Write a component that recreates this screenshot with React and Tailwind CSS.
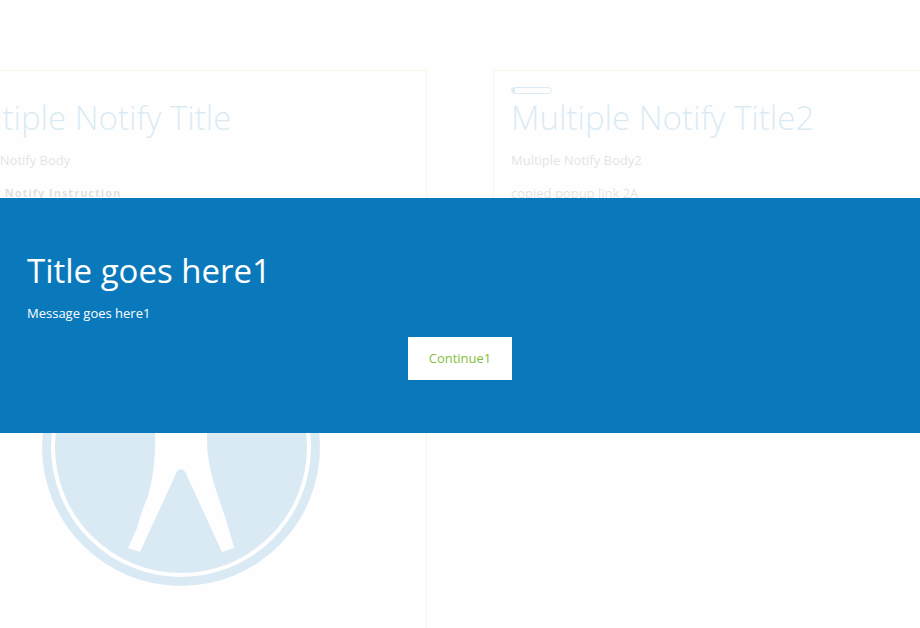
function BodyEmblem() {
  return (
    <svg viewBox="0 0 278 278" className="h-[278px] w-[278px]" role="img" aria-label="Human figure">
      <circle cx="139" cy="139" r="139" fill="#0b79bd" />
      <circle cx="139" cy="139" r="128" fill="none" stroke="#fff" strokeWidth="4" />
      <circle cx="139" cy="52" r="22" fill="#fff" />
      <path
        fill="#fff"
        d="M113 125C114 145 111 172 106 188C100 203 97 212 95 220L86 240L98 244L132 170C136 158 142 158 146 170L180 244L192 240C188 224 182 205 177 191C169 168 164 146 165 125L165 92L113 92Z"
      />
    </svg>
  );
}

function Panel({ title, body, indicator, children }) {
  return (
    <section className="border border-[#c0d060] px-[17px] pt-4">
      <div className="h-[7px]">{indicator}</div>
      <h2 className="mt-px text-[33px] leading-[46px] font-light whitespace-nowrap text-[#0b79bd]">{title}</h2>
      <p className="mt-[9px] text-[13px] leading-5 text-[#444]">{body}</p>
      {children}
    </section>
  );
}

function Dialog() {
  return (
    <div className="fixed inset-0 flex items-center bg-[#fefefe]/85 pt-[3px]">
      <div
        role="dialog"
        aria-modal="true"
        aria-labelledby="dialog-title"
        className="w-full bg-[#0a79bc] px-[27px] pt-[50px] pb-[53px] text-white"
      >
        <h1 id="dialog-title" className="text-[33px] leading-[46px]">Title goes here1</h1>
        <p className="mt-[9px] text-[13px] leading-5 font-medium">Message goes here1</p>
        <div className="mt-[14px] flex justify-center">
          <button type="button" className="h-[43px] bg-white px-[21px] text-[13px] text-[#82bf3b]">
            Continue1
          </button>
        </div>
      </div>
    </div>
  );
}

export default function App() {
  return (
    <div className="h-screen overflow-hidden bg-[#fefefe] pt-[70px] font-['Open_Sans',sans-serif]">
      <main className="-mx-[71px] grid h-screen grid-cols-2 gap-[66px]">
        <Panel title="Multiple Notify Title" body="Multiple Notify Body">
          <p className="mt-[13px] text-[11px] leading-5 font-bold tracking-[1px] text-[#333]">
            Multiple Notify Instruction
          </p>
          <div className="mt-[105px] flex justify-center pl-[5px]">
            <BodyEmblem />
          </div>
        </Panel>
        <div className="grid h-[250px]">
          <Panel
            title="Multiple Notify Title2"
            body="Multiple Notify Body2"
            indicator={
              <div className="h-[7px] w-[41px] overflow-hidden rounded-full border border-[#0b79bd]">
                <div className="h-full w-[3px] bg-[#0b79bd]" />
              </div>
            }
          >
            <p className="mt-[13px] text-[13px] leading-5 text-[#444]">copied popup link 2A</p>
          </Panel>
        </div>
      </main>
      <Dialog />
    </div>
  );
}
